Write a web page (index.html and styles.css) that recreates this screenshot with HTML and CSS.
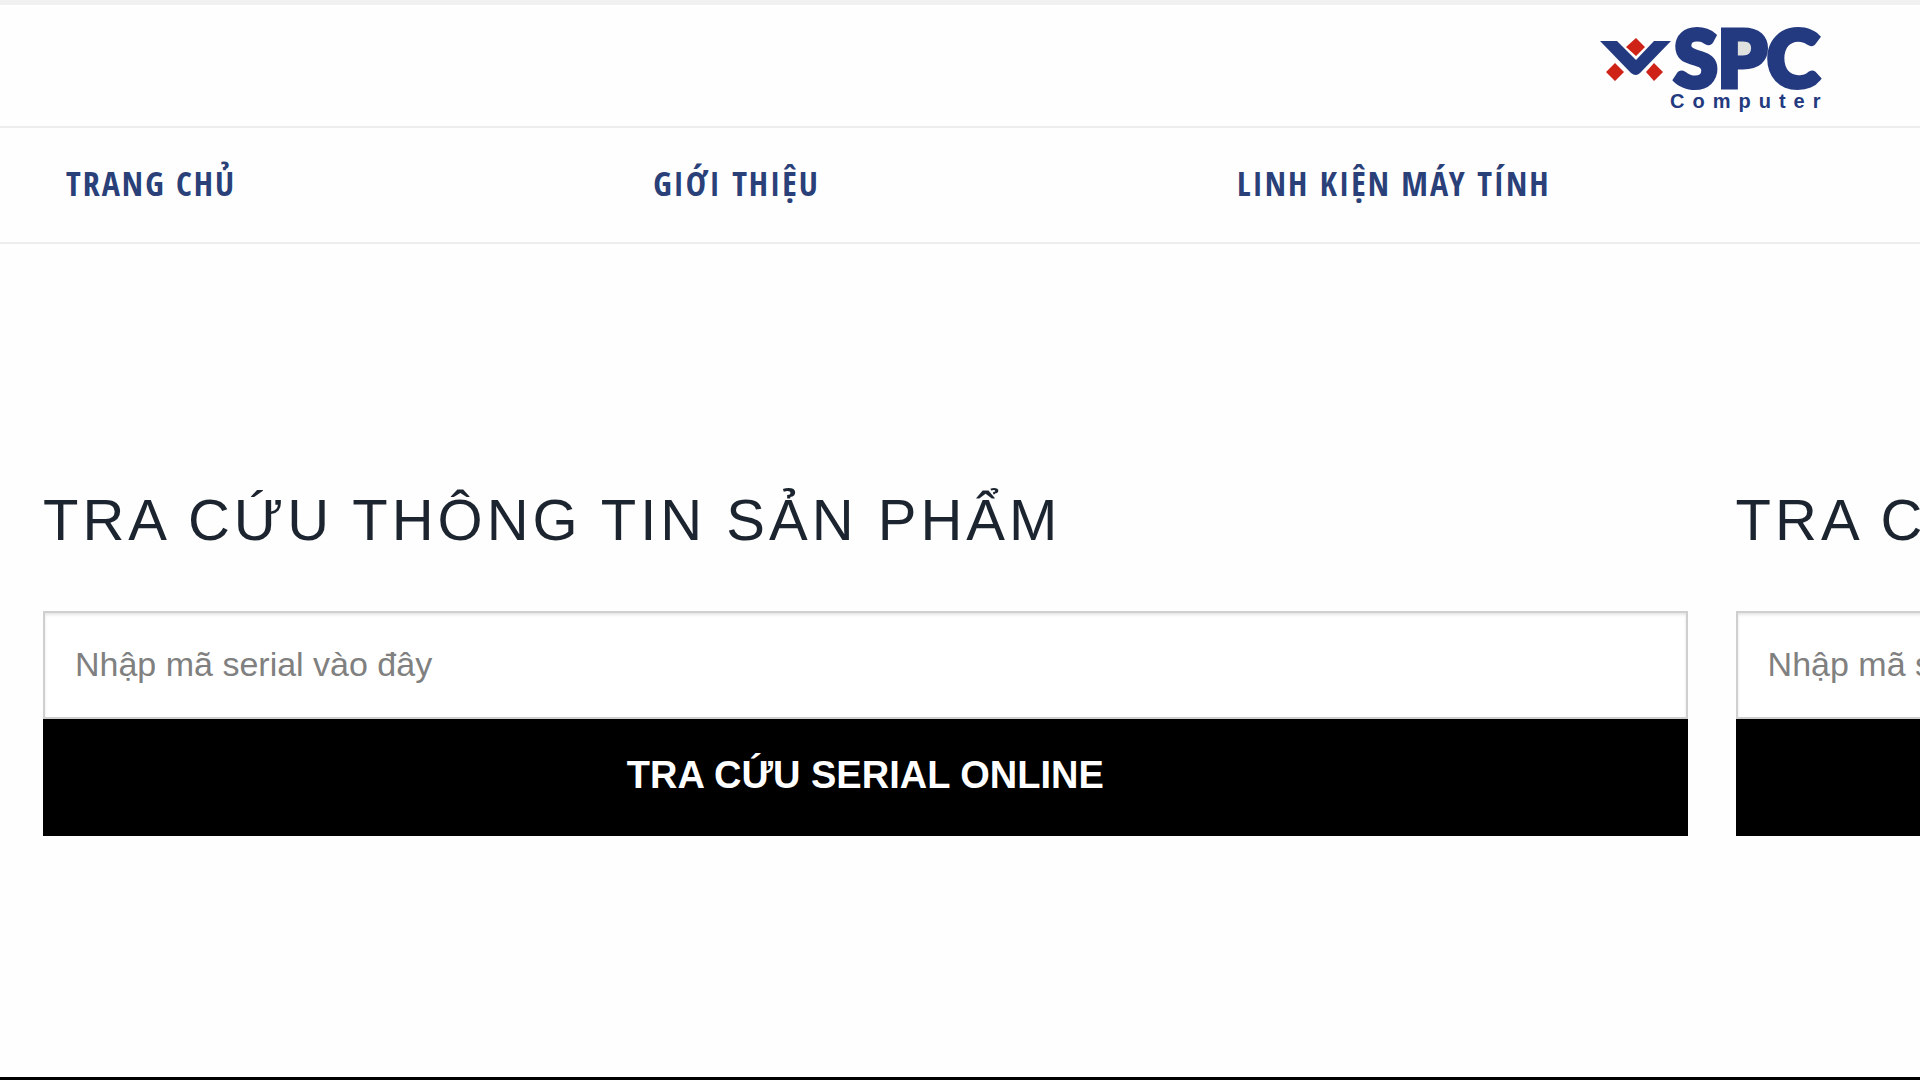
FILE: index.html
```html
<!DOCTYPE html>
<html lang="vi">
<head>
    <meta charset="UTF-8">
    <meta name="viewport" content="width=device-width, initial-scale=1.0">
    <title>SPC Computer</title>
    <link rel="stylesheet" href="styles.css">
</head>
<body>

    <!-- Logo -->
    <header class="header">
        <a href="#" class="logo" aria-label="SPC Computer">
            <svg width="228" height="92" viewBox="0 0 228 92">
                <path class="logo-blue" d="M0 20H17L36 39L54 20H71L40 52Q36 56 31 52Z"/>
                <path class="logo-red" d="M36 17L45 26L36 35L26 26ZM15 42L24 51L15 60L6 51ZM54 42L63 51L54 60L46 51Z"/>
                <ellipse class="logo-hole" cx="143" cy="27" rx="9" ry="10"/>
                <text class="logo-name" x="74" y="66">SPC</text>
                <text class="logo-sub" x="70" y="87">Computer</text>
            </svg>
        </a>
    </header>

    <!-- Main menu -->
    <nav class="menu">
        <a href="#">TRANG CHỦ</a>
        <a href="#">GIỚI THIỆU</a>
        <a href="#">LINH KIỆN MÁY TÍNH</a>
    </nav>

    <!-- Lookup forms -->
    <main class="lookup">
        <form class="lookup-form">
            <h2><label for="serial">TRA CỨU THÔNG TIN SẢN PHẨM</label></h2>
            <input type="text" id="serial" placeholder="Nhập mã serial vào đây">
            <button type="button">TRA CỨU SERIAL ONLINE</button>
        </form>
        <form class="lookup-form">
            <h2><label for="serial-2">TRA CỨU</label></h2>
            <input type="text" id="serial-2" placeholder="Nhập mã serial vào đây">
            <button type="button" aria-label="TRA CỨU"></button>
        </form>
    </main>

    <footer class="footer"></footer>

</body>
</html>
```
FILE: styles.css
```css
* {
    box-sizing: border-box;
}

body {
    margin: 0;
    min-height: 100vh;
    display: flex;
    flex-direction: column;
    background-color: #fefefe;
    color: #1b242f;
    font-family: "Liberation Sans", Arial, sans-serif;
    overflow: hidden;
}

.header {
    display: flex;
    justify-content: flex-end;
    padding: 16px 92px 13px 0;
    border-top: 5px solid #f1f1f1;
    border-bottom: 2px solid #ededed;
}

.logo,
.logo svg {
    display: block;
}

.logo-blue,
.logo-name,
.logo-sub {
    fill: #243a80;
}

.logo-red {
    fill: #cf2318;
}

.logo-hole {
    fill: #dfe1de;
}

.logo-name {
    stroke: #243a80;
    stroke-width: 5px;
    font-family: Lato, sans-serif;
    font-size: 79px;
    font-weight: 900;
}

.logo-sub {
    font-size: 20px;
    font-weight: bold;
    letter-spacing: 8px;
}

.menu {
    display: flex;
    gap: 417px;
    padding: 0 66px 4px;
    border-bottom: 2px solid #ededed;
}

.menu a {
    color: #2a4079;
    font-family: "Liberation Sans Narrow", "Open Sans Condensed", "Roboto Condensed", "Noto Sans", sans-serif;
    font-size: 34px;
    font-weight: bold;
    line-height: 110px;
    letter-spacing: 2px;
    text-decoration: none;
    white-space: nowrap;
}

.lookup {
    flex: 1;
    display: grid;
    grid-auto-flow: column;
    grid-auto-columns: calc(90% - 6px);
    gap: 48px;
    align-items: start;
    padding: 241px 43px 0;
}

.lookup-form {
    display: flex;
    flex-direction: column;
}

.lookup-form h2 {
    margin: 0 0 56px;
    font-size: 58px;
    font-weight: normal;
    line-height: 70px;
    letter-spacing: 4px;
    white-space: nowrap;
}

.lookup-form input {
    height: 108px;
    padding: 0 30px 2px;
    border: 2px solid #cfcfcf;
    border-radius: 0;
    background-color: #fff;
    box-shadow: inset 0 2px 3px rgba(0, 0, 0, 0.1);
    font-family: inherit;
    font-size: 34px;
}

.lookup-form input::placeholder {
    color: #808080;
}

.lookup-form button {
    height: 117px;
    padding: 0 0 4px;
    border: none;
    background-color: #000;
    color: #fff;
    font-family: inherit;
    font-size: 38px;
    font-weight: bold;
}

.footer {
    height: 3px;
    background-color: #000;
}
```
